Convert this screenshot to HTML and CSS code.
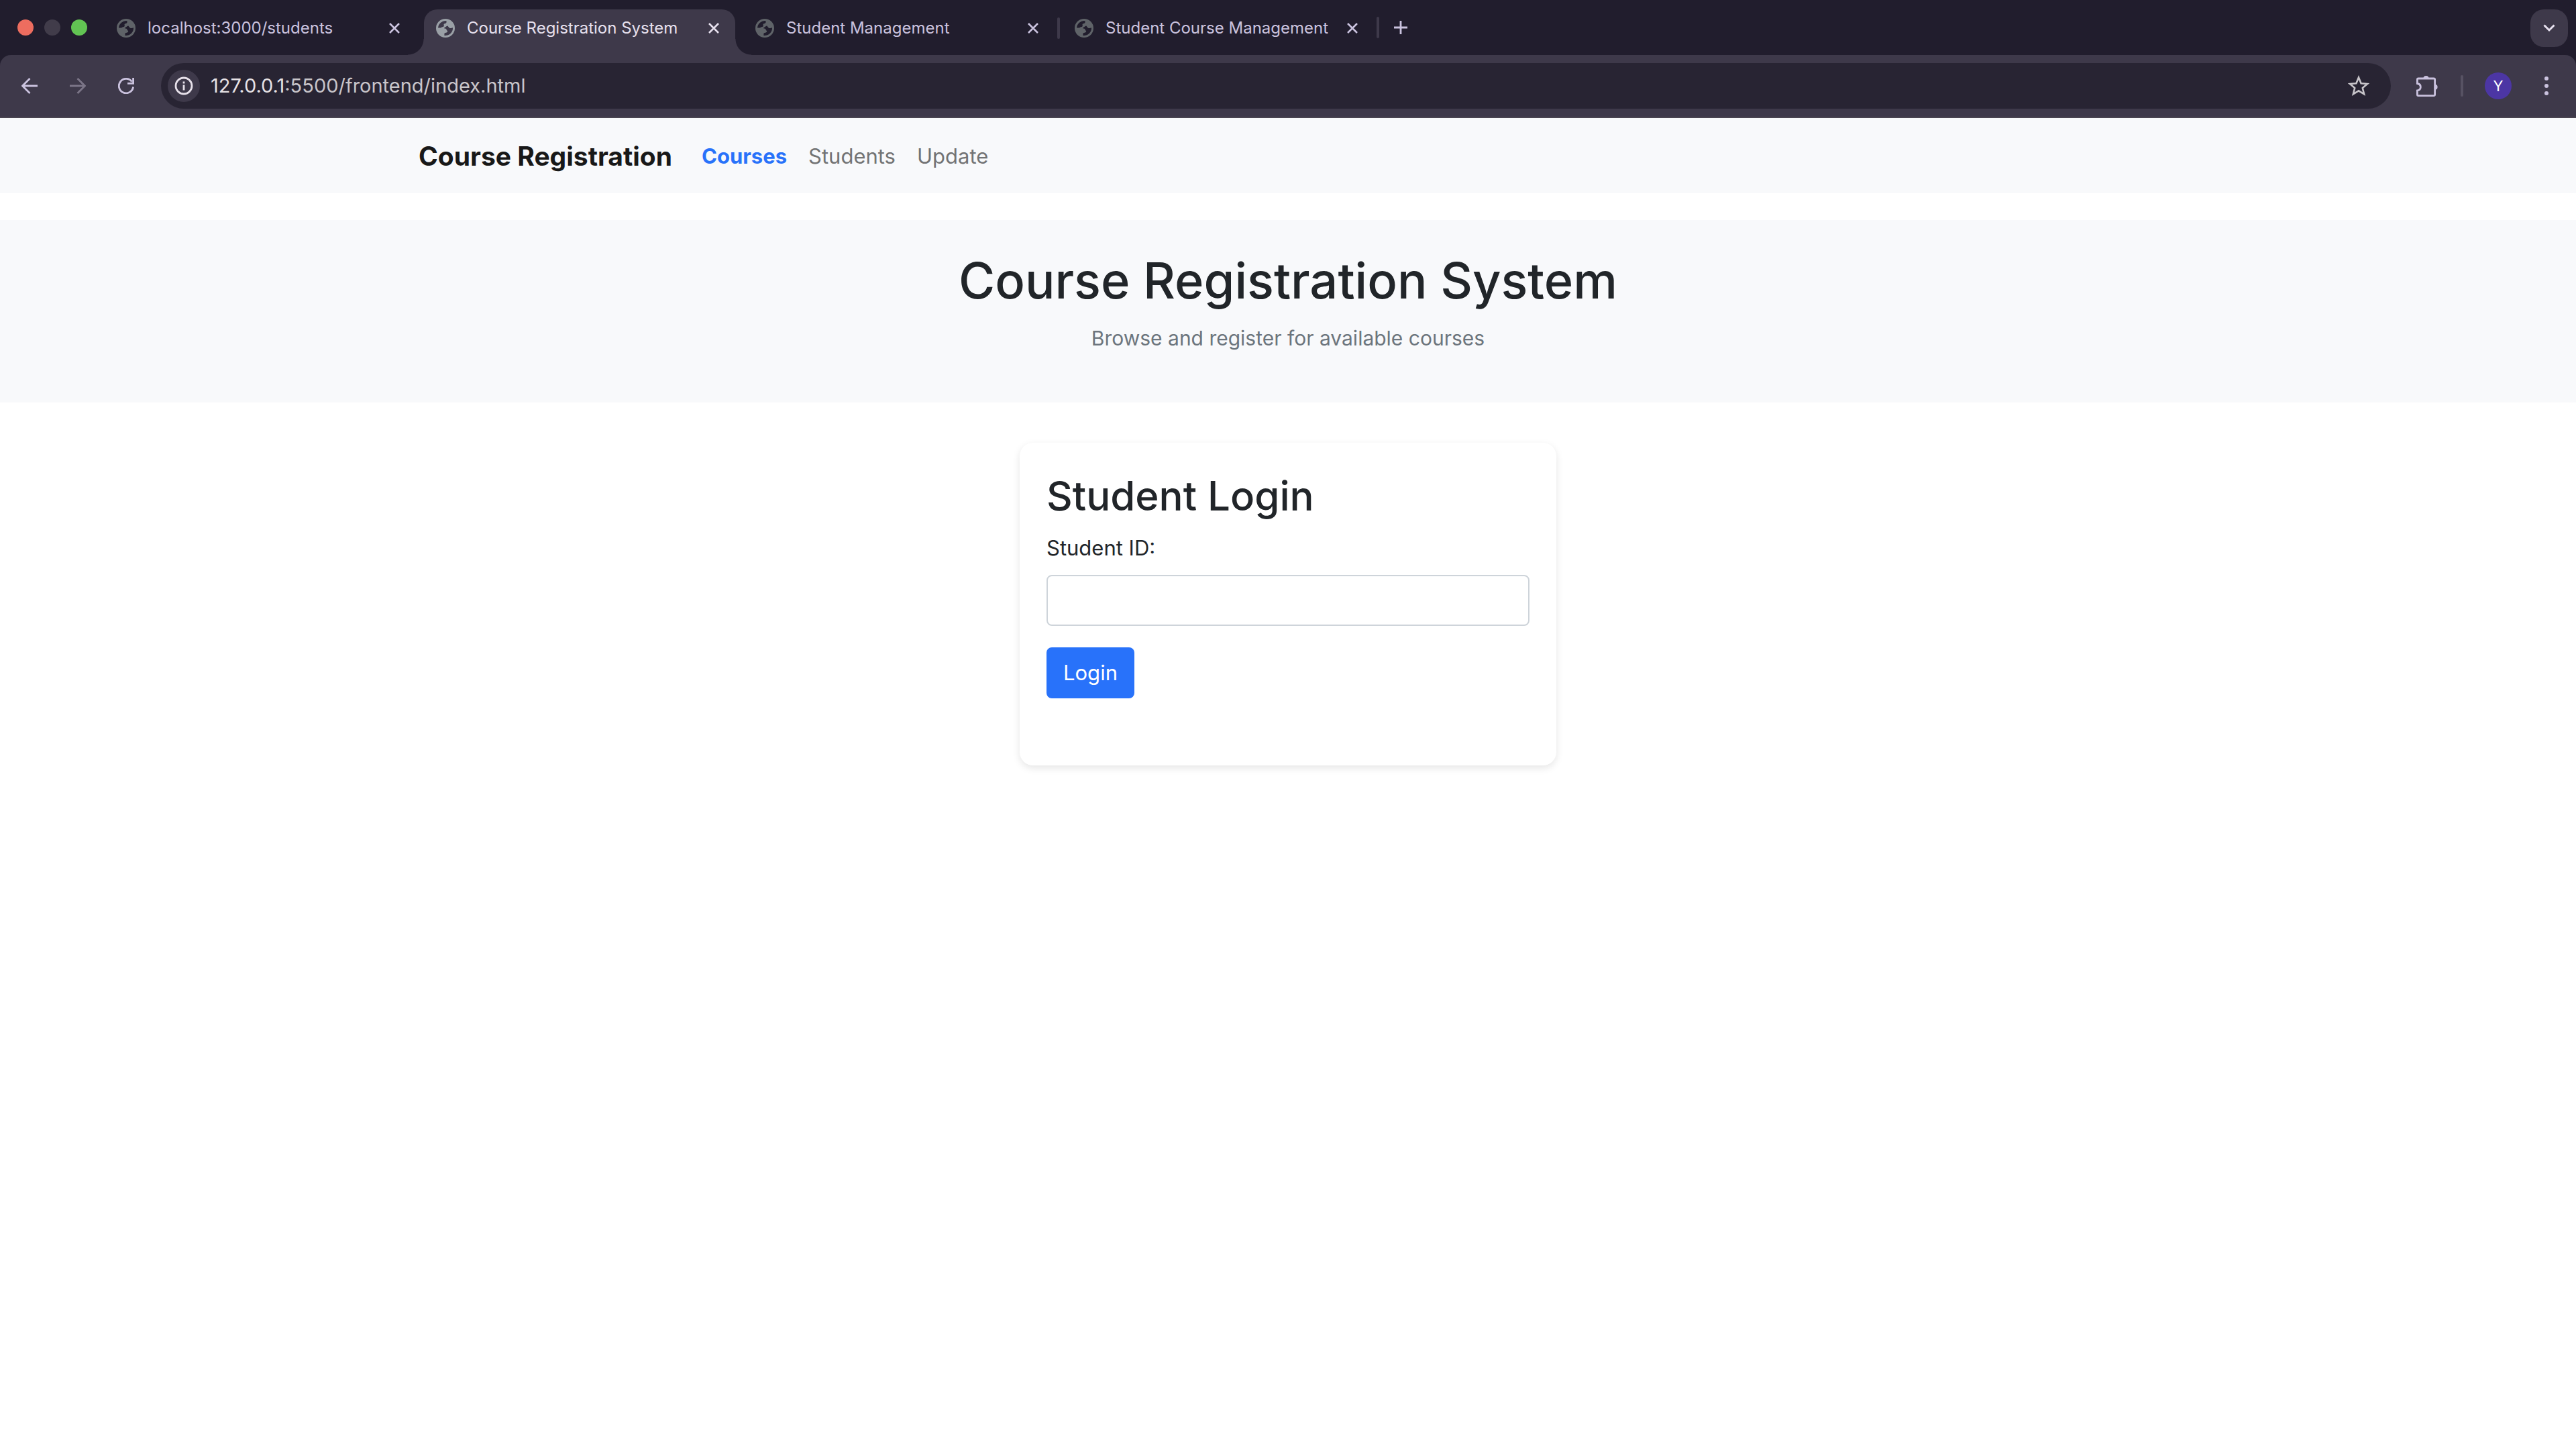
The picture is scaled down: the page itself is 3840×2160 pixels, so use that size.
FILE: index.html
```html
<!DOCTYPE html>
<html lang="en">
<head>
<meta charset="utf-8">
<title>Course Registration System</title>
<link rel="stylesheet" href="styles.css">
</head>
<body>
<svg class="defs" aria-hidden="true">
  <symbol id="globe" viewBox="0 0 28 28"><path fill-rule="evenodd" d="M14 0a14 14 0 1 0 0 28a14 14 0 0 0 0-28zM15.500 3.200C15.500 3.200 16 5.500 14.800 6.600C13.800 7.400 12 7.200 11.600 8.200C11.200 9.400 12.500 10.400 11.400 11.400C10.200 12.400 8.400 11.800 7 13.600L3 13.600A11 11 0 0 1 15.500 3.200zM17 10.500C18 10.500 18.600 13.300 21 14C22.400 14.400 23.600 13.600 25 13.200A11 11 0 0 1 12.400 24.900L12.400 22.600C12.400 20.500 17.200 21.300 17.200 18.600C17.200 17.300 15.800 17.600 15.600 16.200C15.400 14.600 14 14.800 12.400 14.600L12.400 13C14.500 12.400 15.200 10.800 17 10.500z"/></symbol>
  <symbol id="close" viewBox="0 0 16 16"><path d="M1 1L15 15M15 1L1 15" fill="none" stroke="currentColor" stroke-width="2.600"/></symbol>
</svg>
<header class="browser">
  <div class="tabstrip">
    <div class="lights"><span class="light red"></span><span class="light gray"></span><span class="light green"></span></div>
    <div class="tab"><svg class="fav"><use href="#globe"/></svg><span class="tab-title">localhost:3000/students</span><button class="close" aria-label="Close tab"><svg><use href="#close"/></svg></button></div>
    <div class="tab active"><svg class="fav"><use href="#globe"/></svg><span class="tab-title">Course Registration System</span><button class="close" aria-label="Close tab"><svg><use href="#close"/></svg></button></div>
    <div class="tab"><svg class="fav"><use href="#globe"/></svg><span class="tab-title">Student Management</span><button class="close" aria-label="Close tab"><svg><use href="#close"/></svg></button></div>
    <div class="tab divided"><svg class="fav"><use href="#globe"/></svg><span class="tab-title">Student Course Management</span><button class="close" aria-label="Close tab"><svg><use href="#close"/></svg></button></div>
    <div class="new-tab"><button aria-label="New tab"><svg viewBox="0 0 20 20"><path d="M10 0V20M0 10H20" stroke="currentColor" stroke-width="2.800"/></svg></button></div>
    <button class="tab-search" aria-label="Search tabs"><svg viewBox="0 0 18 12"><path d="M1.500 1.500L9 9L16.500 1.500" fill="none" stroke="currentColor" stroke-width="3"/></svg></button>
  </div>
  <div class="toolbar">
    <button class="nav-btn" aria-label="Back"><svg viewBox="0 0 24 24"><path d="M24 12H2M12.500 1L1.500 12L12.500 23" fill="none" stroke="currentColor" stroke-width="2.800"/></svg></button>
    <button class="nav-btn dim" aria-label="Forward"><svg viewBox="0 0 24 24"><path d="M0 12H22M11.500 1L22.500 12L11.500 23" fill="none" stroke="currentColor" stroke-width="2.800"/></svg></button>
    <button class="nav-btn" aria-label="Reload"><svg viewBox="0 0 24 24"><path d="M22.600 13.500A10.700 10.700 0 1 1 20.500 5.600M22.600 0V8.400H14" fill="none" stroke="currentColor" stroke-width="2.800"/></svg></button>
    <div class="omnibox">
      <button class="info" aria-label="Site information"><svg viewBox="0 0 28 28"><circle cx="14" cy="14" r="12" fill="none" stroke="currentColor" stroke-width="2.800"/><path d="M12.600 12.400h2.800v8h-2.800zM12.600 7.600h2.800v2.800h-2.800z" fill="currentColor"/></svg></button>
      <div class="url">127.0.0.1<span>:5500/frontend/index.html</span></div>
      <button class="star" aria-label="Bookmark"><svg viewBox="0 0 32 32"><path d="M16 3.500L19.600 12.300L29 13L21.800 19.100L24.100 28.300L16 23.300L7.900 28.300L10.200 19.100L3 13L12.400 12.300Z" fill="none" stroke="currentColor" stroke-width="2.600"/></svg></button>
    </div>
    <button class="ext" aria-label="Extensions"><svg viewBox="0 0 32 32"><path d="M1.400 6.500Q1.400 5 2.900 5H26Q27.600 5 27.600 6.500V29Q27.600 30.600 26 30.600H2.900Q1.400 30.600 1.400 29V23C8 22 8 13.500 1.400 12.500Z" fill="none" stroke="currentColor" stroke-width="2.800"/><path d="M10.500 5a4 4 0 0 1 8 0zM27.600 13.800a4 4 0 0 1 0 8z" fill="currentColor"/></svg></button>
    <span class="bar"></span>
    <button class="avatar" aria-label="Profile">Y</button>
    <button class="menu" aria-label="Menu"><span></span><span></span><span></span></button>
  </div>
</header>
<nav class="navbar">
  <div class="container">
    <a class="brand" href="#">Course Registration</a>
    <a class="link current" href="#">Courses</a>
    <a class="link" href="#">Students</a>
    <a class="link" href="#">Update</a>
  </div>
</nav>
<section class="hero">
  <h1>Course Registration System</h1>
  <p>Browse and register for available courses</p>
</section>
<main>
  <form class="card">
    <h2>Student Login</h2>
    <label for="sid">Student ID:</label>
    <input id="sid" type="text">
    <button class="login" type="button">Login</button>
  </form>
</main>
</body>
</html>
```
FILE: styles.css
```css
* { box-sizing: border-box; }
body { min-height: 100vh; margin: 0; background: #fff; color: #212529; font-family: Inter, "Liberation Sans", sans-serif; font-size: 31px; line-height: 48px; }
button { border: 0; padding: 0; margin: 0; background: none; color: inherit; font: inherit; display: flex; align-items: center; justify-content: center; }
svg { display: block; fill: currentColor; }
.defs { position: absolute; width: 0; height: 0; }

.browser { background: #211d2d; color: #cac2de; }
.tabstrip { display: flex; align-items: flex-start; gap: 12px; height: 82px; padding-right: 12px; }
.lights { display: flex; gap: 16px; align-items: center; height: 82px; padding: 0 14px 0 26px; }
.light { width: 24px; height: 24px; border-radius: 50%; }
.red { background: #ed6d5f; }
.gray { background: #413c4a; }
.green { background: #62c453; }
.tab { position: relative; display: flex; align-items: center; width: 464px; height: 68px; margin-top: 14px; padding: 0 24px 12px 18px; flex: none; border-radius: 20px 20px 0 0; }
.tab.active { background: #3e394a; color: #e6e0ee; }
/* Flared feet that join the active tab to the toolbar */
.tab.active::before, .tab.active::after { content: ""; position: absolute; bottom: 0; width: 24px; height: 24px; }
.tab.active::before { right: 100%; background: radial-gradient(circle at 0 0, transparent 23px, #3e394a 24px); }
.tab.active::after { left: 100%; background: radial-gradient(circle at 100% 0, transparent 23px, #3e394a 24px); }
.fav { width: 28px; height: 28px; color: #5f6368; margin-right: 18px; flex: none; }
.active .fav { color: #9aa0a6; }
.tab-title { flex: 1; font-size: 24px; line-height: 32px; white-space: nowrap; }
.close svg { width: 16px; height: 16px; }
.divided::before, .new-tab::before { content: ""; width: 4px; height: 32px; border-radius: 2px; background: #3e394a; }
.divided::before { position: absolute; left: -8px; top: 12px; }
.new-tab { display: flex; align-items: center; gap: 22px; height: 82px; margin-left: -8px; }
.new-tab svg { width: 20px; height: 20px; }
.tab-search { width: 56px; height: 56px; margin: 14px 0 0 auto; border-radius: 20px; background: #3e394a; color: #e6e0ee; }
.tab-search svg { width: 18px; height: 12px; }

.toolbar { display: flex; align-items: center; height: 94px; padding: 0 41px 0 32px; background: #3e394a; border-bottom: 2px solid #4a4551; border-radius: 16px 16px 0 0; }
.nav-btn { margin-right: 48px; }
.nav-btn svg { width: 24px; height: 24px; }
.dim { color: #7b7587; }
.omnibox { display: flex; align-items: center; flex: 1; height: 68px; margin-left: -8px; padding: 0 32px 0 10px; border-radius: 34px; background: #282433; color: #c8c5ca; }
.info { width: 48px; height: 48px; border-radius: 50%; background: #3e394a; color: #e6e0e9; }
.info svg { width: 28px; height: 28px; }
.url { flex: 1; margin-left: 16px; font-size: 29px; line-height: 40px; color: #e6e1e5; }
.url span { color: #c8c5ca; }
.star svg { width: 32px; height: 32px; }
.ext { margin-left: 38px; }
.ext svg { width: 32px; height: 32px; }
.bar { width: 4px; height: 32px; margin: 0 32px 0 34px; border-radius: 2px; background: #575263; }
.avatar { width: 40px; height: 40px; border-radius: 50%; background: #4c36a4; color: #fff; font-size: 22px; line-height: 28px; }
.menu { flex-direction: column; gap: 5px; margin-left: 49px; }
.menu span { width: 6px; height: 6px; border-radius: 50%; background: #cac2de; }

.navbar { background: #f8f9fb; margin-bottom: 40px; }
.container { display: flex; align-items: center; max-width: 2640px; margin: 0 auto; padding: 33px 24px 31px; }
.navbar a { text-decoration: none; }
.brand { margin-right: 44px; color: #181818; font-size: 39px; font-weight: 700; }
.link { margin-right: 32px; color: #727374; }
.link.current { color: #2872fa; font-weight: 700; }
.hero { padding: 40px; margin-bottom: 60px; background: #f8f9fb; text-align: center; }
h1, h2 { margin: 0; font-weight: 500; }
h1 { margin-bottom: 12px; font-size: 74px; line-height: 100px; }
.hero p { margin: 0 0 32px; color: #6c757d; font-size: 30px; }
.card { display: flex; flex-direction: column; align-items: flex-start; max-width: 800px; margin: 0 auto; padding: 40px 40px 100px; border-radius: 20px; background: #fff; box-shadow: 0 4px 12px rgba(0, 0, 0, .1); }
h2 { margin-bottom: 15px; font-size: 60px; line-height: 78px; }
.card input { width: 100%; height: 76px; margin: 16px 0 32px; padding: 12px 24px; border: 2px solid #ced4da; border-radius: 8px; font: inherit; }
.login { height: 76px; padding: 0 25px; border-radius: 8px; background: #2872fa; color: #fff; }
```
